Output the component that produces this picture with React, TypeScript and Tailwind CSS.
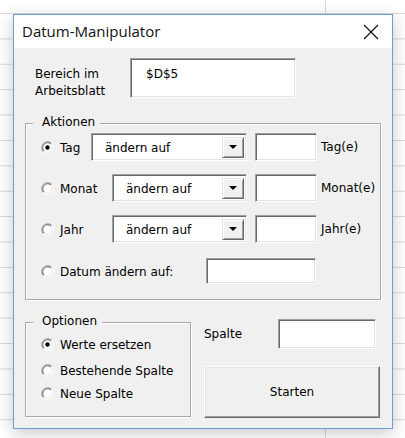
function Radio({ checked = false }: { checked?: boolean }) {
  return (
    <svg width="13" height="13" viewBox="0 0 13 13" className="shrink-0">
      <circle cx="6.5" cy="6.5" r="6" fill="#fff" />
      <path d="M2.26 10.74 A6 6 0 0 1 10.74 2.26" fill="none" stroke="#a0a0a0" strokeWidth="1" />
      <path d="M10.74 2.26 A6 6 0 0 1 2.26 10.74" fill="none" stroke="#ffffff" strokeWidth="1" />
      <path d="M2.97 10.03 A5 5 0 0 1 10.03 2.97" fill="none" stroke="#5a5a5a" strokeWidth="1" />
      <path d="M10.03 2.97 A5 5 0 0 1 2.97 10.03" fill="none" stroke="#e3e3e3" strokeWidth="1" />
      {checked && <circle cx="6.5" cy="6.5" r="2.2" fill="#000" />}
    </svg>
  );
}

const sunken =
  "border border-t-[#a0a0a0] border-l-[#a0a0a0] border-r-white border-b-white bg-white shadow-[inset_1px_1px_0_#696969,inset_-1px_-1px_0_#e3e3e3]";

function TextBox({ className = "", children }: { className?: string; children?: React.ReactNode }) {
  return <div className={`${sunken} ${className}`}>{children}</div>;
}

function Combo({ className = "" }: { className?: string }) {
  return (
    <div className={`${sunken} flex items-center h-[28px] pl-[13px] pr-[2px] ${className}`}>
      <span className="flex-1 pt-[1px]">ändern auf</span>
      <div className="w-[22px] h-[21px] flex items-center justify-center bg-[#f0f0f0] border border-t-[#e3e3e3] border-l-[#e3e3e3] border-r-[#696969] border-b-[#696969] shadow-[inset_1px_1px_0_#fff,inset_-1px_-1px_0_#a0a0a0]">
        <svg width="8" height="4" viewBox="0 0 8 4">
          <path d="M0 0 H8 L4 4 Z" fill="#000" />
        </svg>
      </div>
    </div>
  );
}

function Group({
  label,
  className = "",
  children,
}: {
  label: string;
  className?: string;
  children: React.ReactNode;
}) {
  return (
    <div
      className={`relative border border-[#a8a8a8] shadow-[inset_1px_1px_0_#fff,1px_1px_0_#fff] ${className}`}
    >
      <span className="absolute left-[7px] -top-[10px] pl-[9px] pr-[5px] leading-4 bg-[#f0f0f0]">
        {label}
      </span>
      {children}
    </div>
  );
}

function RadioLabel({ label, checked, className = "" }: { label: string; checked?: boolean; className?: string }) {
  return (
    <div className={`flex items-center gap-[6px] shrink-0 ${className}`}>
      <Radio checked={checked} />
      <span className="pt-[1px]">{label}</span>
    </div>
  );
}

export default function App() {
  return (
    <div className="relative w-[405px] h-[438px] overflow-hidden bg-white bg-[linear-gradient(to_bottom,#d9d9d9_1px,transparent_1px),linear-gradient(to_right,#d9d9d9_1px,transparent_1px)] bg-size-[110px_25.4px] bg-position-[105px_13px]">
      <div className="absolute left-[13px] top-[14px] w-[380px] h-[415px] flex flex-col border border-[#6a9fd6] shadow-[0_4px_16px_rgba(0,0,0,0.22)] text-black text-[12px] font-['DejaVu_Sans',sans-serif]">
        <div className="h-[33px] bg-white flex items-center justify-between pl-[8px] pr-[13px]">
          <span className="font-['Open_Sans',sans-serif] text-[15px] text-[#111]">Datum-Manipulator</span>
          <svg width="16" height="16" viewBox="0 0 16 16">
            <path d="M1 1 L15 15 M15 1 L1 15" stroke="#111" strokeWidth="1.2" fill="none" />
          </svg>
        </div>
        <div className="flex-1 bg-[#f0f0f0] flex flex-col pt-[10px]">
          <div className="flex items-start">
            <div className="ml-[21px] w-[95px] mt-[8px] leading-[17px]">
              Bereich im
              <br />
              Arbeitsblatt
            </div>
            <TextBox className="w-[166px] h-[40px] pl-[15px] pt-[6px]">$D$5</TextBox>
          </div>

          <Group label="Aktionen" className="ml-[11px] mt-[23px] w-[356px] h-[177px] pt-[9px] pl-[15px] flex flex-col">
            <div className="flex items-center h-[28px]">
              <RadioLabel label="Tag" checked className="w-[50px]" />
              <Combo className="w-[156px]" />
              <TextBox className="ml-[8px] w-[62px] h-[28px]" />
              <span className="ml-[4px]">Tag(e)</span>
            </div>
            <div className="flex items-center h-[28px] mt-[13px]">
              <RadioLabel label="Monat" className="w-[71px]" />
              <Combo className="w-[135px]" />
              <TextBox className="ml-[8px] w-[62px] h-[28px]" />
              <span className="ml-[4px]">Monat(e)</span>
            </div>
            <div className="flex items-center h-[28px] mt-[13px]">
              <RadioLabel label="Jahr" className="w-[71px]" />
              <Combo className="w-[135px]" />
              <TextBox className="ml-[8px] w-[62px] h-[28px]" />
              <span className="ml-[4px]">Jahr(e)</span>
            </div>
            <div className="flex items-center h-[26px] mt-[15px]">
              <RadioLabel label="Datum ändern auf:" className="w-[165px]" />
              <TextBox className="w-[110px] h-[26px]" />
            </div>
          </Group>

          <div className="flex items-start mt-[19px]">
            <Group label="Optionen" className="ml-[11px] mt-[3px] w-[166px] h-[95px] pl-[15px] flex flex-col">
              <RadioLabel label="Werte ersetzen" checked className="mt-[13px] h-[16px]" />
              <RadioLabel label="Bestehende Spalte" className="mt-[10px] h-[16px]" />
              <RadioLabel label="Neue Spalte" className="mt-[7px] h-[16px]" />
            </Group>
            <div className="ml-[13px] w-[176px] flex flex-col">
              <div className="flex items-center h-[30px]">
                <span className="w-[74px]">Spalte</span>
                <TextBox className="w-[98px] h-[30px]" />
              </div>
              <button className="mt-[17px] w-[176px] h-[52px] bg-[#f0f0f0] border border-t-white border-l-white border-r-[#696969] border-b-[#696969] shadow-[inset_-1px_-1px_0_#a0a0a0,inset_1px_1px_0_#e3e3e3] text-[12px] text-black">
                Starten
              </button>
            </div>
          </div>
        </div>
      </div>
    </div>
  );
}
